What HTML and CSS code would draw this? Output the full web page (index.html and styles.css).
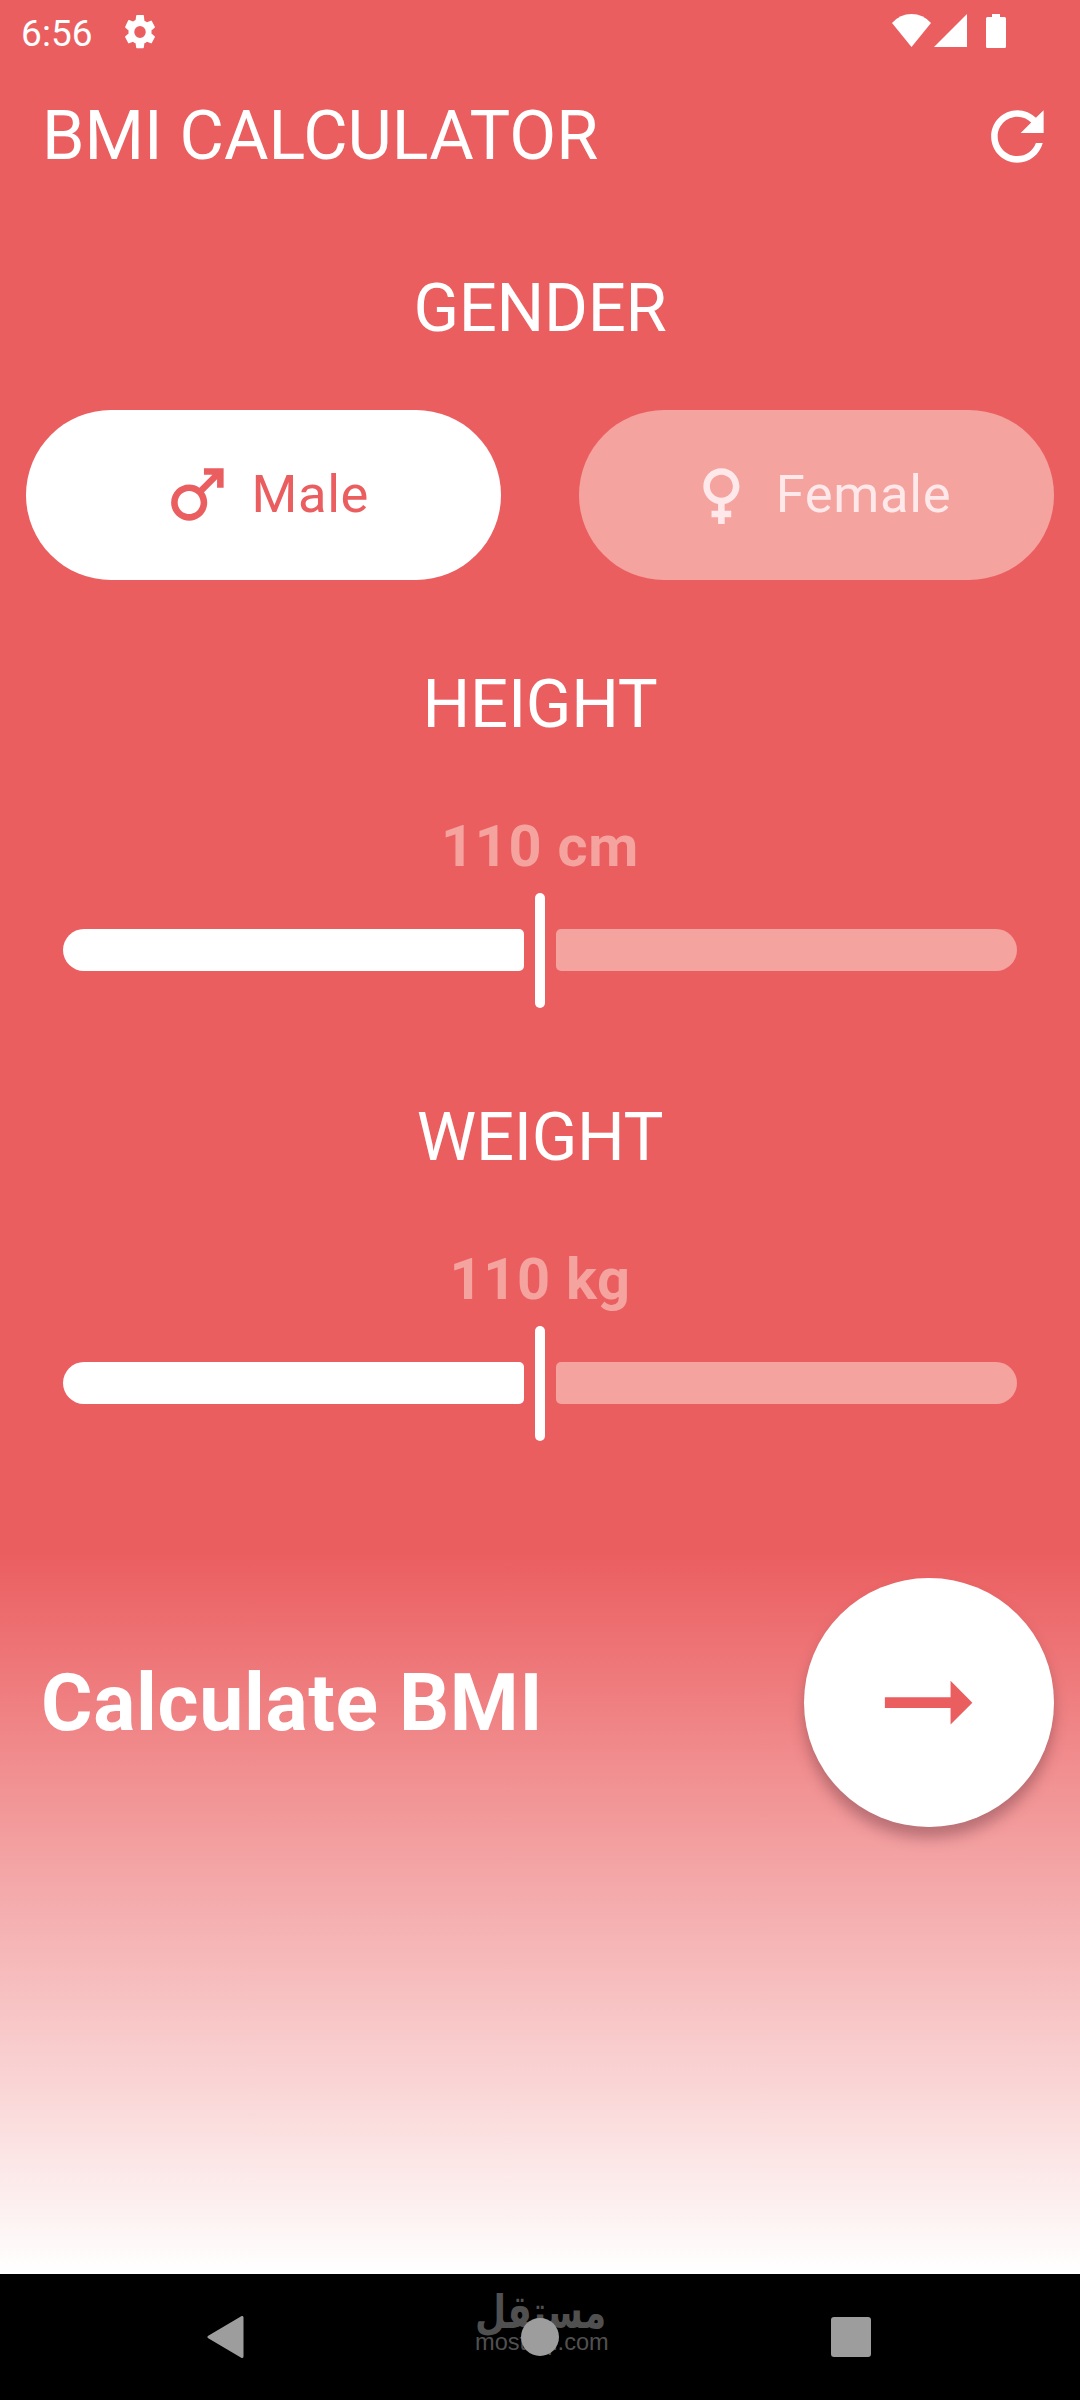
FILE: index.html
```html
<!DOCTYPE html>
<html lang="en">
<head>
<meta charset="utf-8">
<title>BMI Calculator</title>
<link rel="stylesheet" href="styles.css">
</head>
<body>
<main class="screen">
  <div class="status">
    <span class="clock">6:56</span>
    <svg class="gear" viewBox="2 2 20 20" preserveAspectRatio="none"><path d="M19.14 12.94c.04-.3.06-.61.06-.94 0-.32-.02-.64-.07-.94l2.03-1.58a.49.49 0 0 0 .12-.61l-1.92-3.32a.49.49 0 0 0-.59-.22l-2.39.96c-.5-.38-1.03-.7-1.62-.94L14.4 2.2a.48.48 0 0 0-.48-.2h-3.84c-.24 0-.43.17-.47.41l-.36 2.54c-.59.24-1.13.57-1.62.94l-2.39-.96a.48.48 0 0 0-.59.22L2.74 8.87c-.12.21-.08.47.12.61l2.03 1.58c-.05.3-.09.63-.09.94s.02.64.07.94l-2.03 1.58a.49.49 0 0 0-.12.61l1.92 3.32c.12.22.37.29.59.22l2.39-.96c.5.38 1.03.7 1.62.94l.36 2.54c.05.24.24.41.48.41h3.84c.24 0 .44-.17.47-.41l.36-2.54c.59-.24 1.13-.56 1.62-.94l2.39.96c.22.08.47 0 .59-.22l1.92-3.32a.48.48 0 0 0-.12-.61zM12 15.6a3.6 3.6 0 1 1 0-7.2 3.6 3.6 0 0 1 0 7.2z"/></svg>
    <div class="signals">
      <svg class="wifi" viewBox="0 0 39 33"><path d="M0 9Q8 0 19.500 0T39 9L19.500 33z"/></svg>
      <svg class="cell" viewBox="0 0 33 33"><path d="M0 33H33V0z"/></svg>
      <svg class="battery" viewBox="0 0 20 34"><path d="M6 0h8v3h4.500q1.500 0 1.500 1.500v28q0 1.500-1.500 1.500h-17q-1.500 0-1.500-1.500v-28q0-1.500 1.500-1.500H6z"/></svg>
    </div>
  </div>

  <header class="topbar">
    <h1 class="title">BMI CALCULATOR</h1>
    <svg class="icon" viewBox="0 0 24 24"><path d="M17.65 6.35C16.2 4.9 14.21 4 12 4c-4.42 0-7.99 3.58-7.99 8s3.57 8 7.99 8c3.73 0 6.84-2.55 7.73-6h-2.08c-.82 2.33-3.04 4-5.65 4-3.31 0-6-2.69-6-6s2.69-6 6-6c1.66 0 3.14.69 4.22 1.78L13 11h7V4l-2.35 2.35z"/></svg>
  </header>

  <section class="gender">
    <h2 class="heading">GENDER</h2>
    <div class="choices">
      <button class="choice selected">
        <svg class="icon" viewBox="0 0 24 24"><path d="M9.500 11c1.930 0 3.500 1.570 3.500 3.500S11.430 18 9.500 18 6 16.430 6 14.500 7.570 11 9.500 11zm0-2C6.460 9 4 11.460 4 14.500S6.460 20 9.500 20s5.500-2.460 5.500-5.500c0-1.160-.360-2.230-.970-3.120L18 7.420V10h2V4h-6v2h2.580l-3.970 3.970C11.730 9.360 10.660 9 9.500 9z"/></svg>
        <span>Male</span>
      </button>
      <button class="choice">
        <svg class="icon" viewBox="0 0 24 24"><path d="M17.500 9.500C17.500 6.460 15.040 4 12 4S6.500 6.460 6.500 9.500c0 2.700 1.940 4.930 4.500 5.400V17H9v2h2v2h2v-2h2v-2h-2v-2.100c2.560-.470 4.500-2.700 4.500-5.400zm-9 0C8.500 7.570 10.070 6 12 6s3.500 1.570 3.500 3.500S13.930 13 12 13s-3.500-1.570-3.500-3.500z"/></svg>
        <span>Female</span>
      </button>
    </div>
  </section>

  <section class="measure">
    <h2 class="heading">HEIGHT</h2>
    <p class="value">110 cm</p>
    <div class="slider"><span class="track filled"></span><span class="thumb"></span><span class="track"></span></div>
  </section>

  <section class="measure">
    <h2 class="heading">WEIGHT</h2>
    <p class="value">110 kg</p>
    <div class="slider"><span class="track filled"></span><span class="thumb"></span><span class="track"></span></div>
  </section>

  <div class="calculate">
    <span class="label">Calculate BMI</span>
    <button class="go"><svg class="arrow" viewBox="0 0 24 24"><path d="M16.010 11H4v2h12.010v3L20 12l-3.990-4v3z"/></svg></button>
  </div>
</main>

<nav class="navbar">
  <svg class="back" viewBox="0 0 37 42"><path d="M35 1.500V40.500L2 21z"/></svg>
  <span class="home"></span>
  <span class="recent"></span>
  <div class="watermark">
    <span class="brand" lang="ar">مستقل</span>
    <span class="domain">mostaql.com</span>
  </div>
</nav>
</body>
</html>
```
FILE: styles.css
```css
* { box-sizing: border-box; }
body { margin: 0; font-family: Roboto, "Liberation Sans", sans-serif; background: #000; }
h1, h2, p { margin: 0; font-weight: 400; }
button { border: 0; padding: 0; font: inherit; }
svg { display: block; fill: currentColor; }

.screen {
  height: 2274px;
  color: #fff;
  background: linear-gradient(#eb5e60 1553px, #fff 2274px);
}

.status { display: flex; height: 63px; padding: 14px 74px 0 21px; }
.clock { width: 103px; font-size: 37px; line-height: 39px; letter-spacing: 0.1px; }
.gear { width: 32px; height: 34px; margin-top: 1px; }
.signals { display: flex; margin-left: auto; }
.wifi { width: 39px; height: 33px; margin-right: 3px; }
.cell { width: 33px; height: 33px; margin-right: 19px; }
.battery { width: 20px; height: 34px; }

.topbar { display: flex; justify-content: space-between; align-items: center; height: 147px; padding: 0 23px 0 42px; }
.title { font-size: 68.25px; line-height: 84px; padding-bottom: 2px; }
.icon { width: 78.75px; height: 78.75px; }

.heading { text-align: center; font-size: 67px; line-height: 84px; letter-spacing: -0.3px; }
.gender { padding: 56px 26.25px 0; height: 410px; }
.choices { display: flex; gap: 78.75px; margin-top: 60px; }
.choice {
  flex: 1; height: 170px; border-radius: 85px;
  display: flex; align-items: center; justify-content: center; gap: 15px;
  padding-bottom: 2px;
  font-size: 52.5px; letter-spacing: 0.65px;
  background: #f4a39f; color: #fee8ea;
}
.choice.selected { background: #fff; color: #eb5e60; }

.measure { height: 433px; padding: 42px 63px 0; }
.value { margin-top: 66px; text-align: center; font-size: 57.75px; line-height: 68px; font-weight: 700; letter-spacing: 0.7px; color: #f4a39f; }
.slider { display: flex; align-items: center; justify-content: space-between; height: 115px; margin-top: 13px; }
.track { width: 461px; height: 42px; margin-bottom: 1px; border-radius: 5px 21px 21px 5px; background: #f4a39f; }
.track.filled { border-radius: 21px 5px 5px 21px; background: #fff; }
.thumb { width: 10px; height: 115px; border-radius: 5px; background: #fff; }

.calculate { display: flex; align-items: center; justify-content: space-between; padding: 92px 26.2px 0 41px; }
.label { font-size: 78.75px; font-weight: 700; letter-spacing: 0.65px; }
.go {
  width: 249.4px; height: 249.4px; border-radius: 50%;
  display: flex; align-items: center; justify-content: center;
  color: #eb5e60; background: #fff;
  box-shadow: 0 11px 14px rgba(100, 50, 60, 0.4);
}
.arrow { width: 131.25px; height: 131.25px; }

.navbar {
  position: relative; height: 126px; padding: 0 209px 0 207px;
  display: flex; align-items: center; justify-content: space-between;
  background: #000; color: #9d9d9d;
}
.back { width: 37px; height: 42px; stroke: currentColor; stroke-width: 3px; stroke-linejoin: round; }
.home { position: relative; z-index: 1; width: 38px; height: 38px; margin-left: 5px; border-radius: 50%; background: #9d9d9d; }
.recent { width: 40px; height: 40px; border-radius: 3px; background: #9d9d9d; }
.watermark { position: absolute; left: 475px; top: 16px; width: 130px; color: #505050; }
.brand {
  display: block; width: max-content; transform: scaleX(0.78); transform-origin: 0 0;
  font-family: "DejaVu Sans", sans-serif; font-weight: 700; font-size: 46px; line-height: 44px;
}
.domain { display: block; margin-top: -3px; font-family: "Liberation Sans", sans-serif; font-size: 23.6px; line-height: 22px; }
```
